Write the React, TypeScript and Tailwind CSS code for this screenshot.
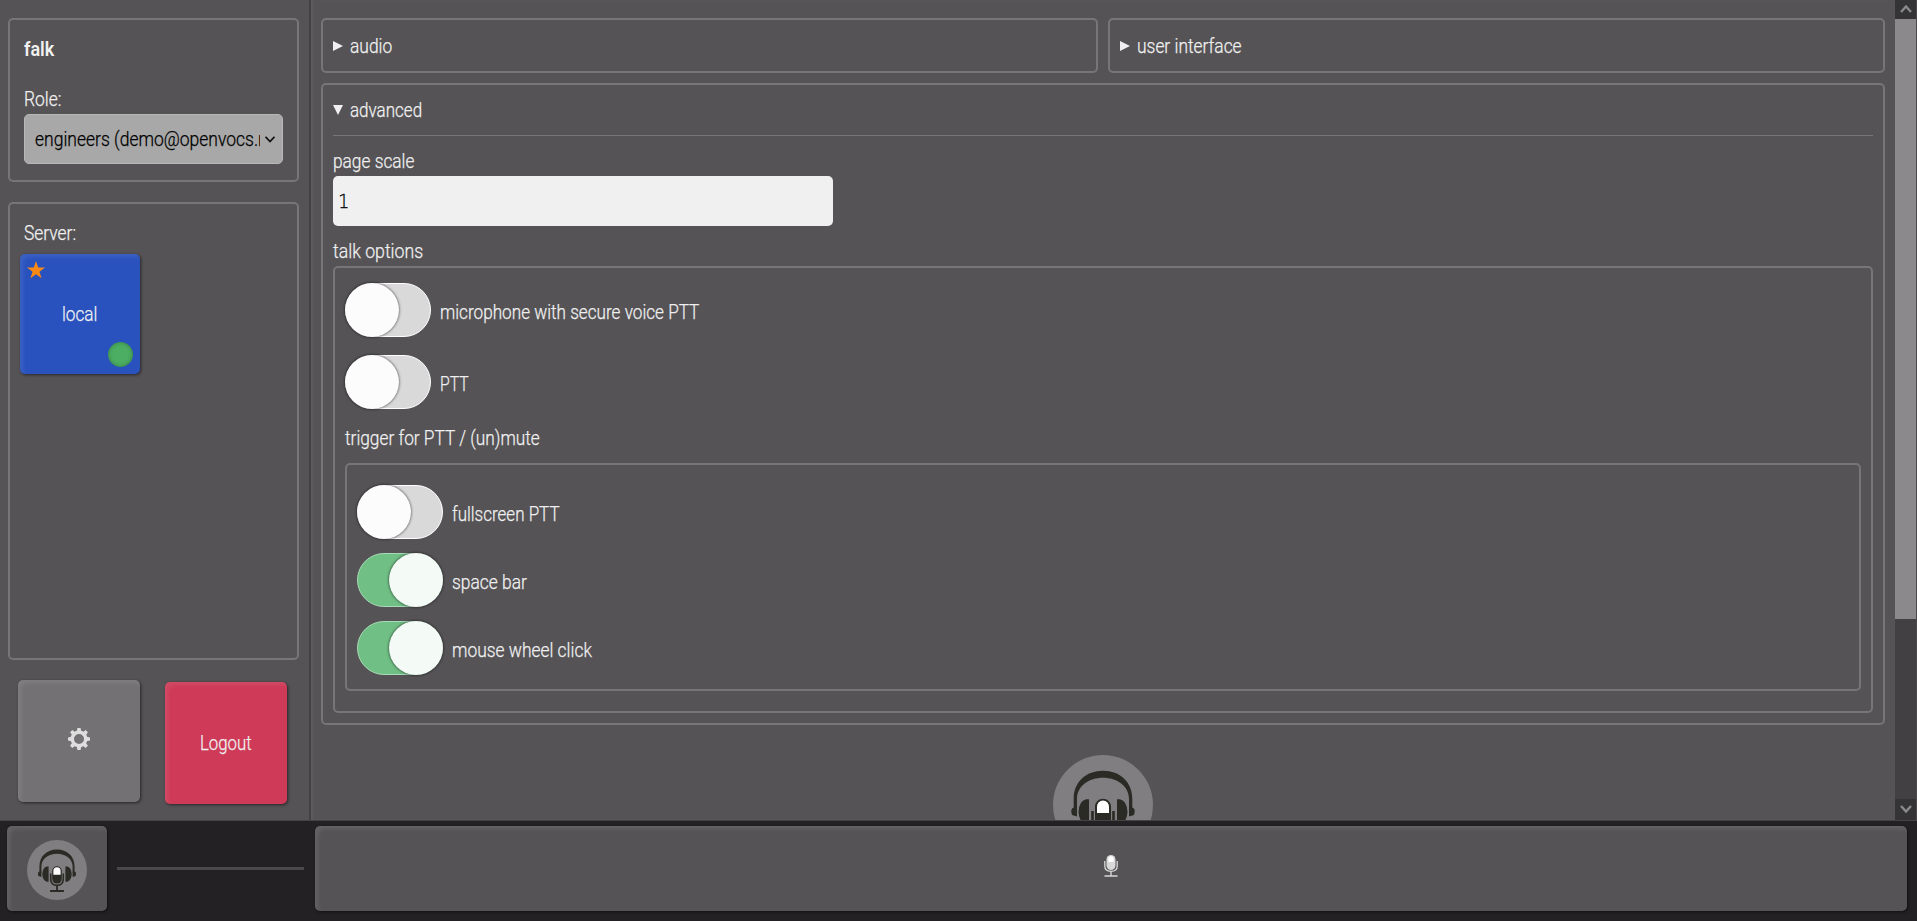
import type { ReactNode } from "react";

const raised =
  "shadow-[inset_4px_4px_4px_-1px_rgba(255,255,255,0.09),1px_1px_3px_rgba(0,0,0,0.55)]";

function Label({
  children,
  className = "origin-left scale-x-[0.87]",
}: {
  children: ReactNode;
  className?: string;
}) {
  return (
    <span
      className={`inline-block whitespace-nowrap font-light leading-6 [-webkit-text-stroke:0.25px_currentColor] ${className}`}
    >
      {children}
    </span>
  );
}

function Toggle({ on = false }: { on?: boolean }) {
  return (
    <span
      className={`flex h-[54px] w-[86px] shrink-0 rounded-full border ${
        on ? "justify-end border-[#a9dab7] bg-[#70bf85]" : "justify-start border-white bg-[#d9d9d9]"
      }`}
    >
      <span
        className={`-m-px size-[54px] rounded-full shadow-[0_0_3px_rgba(0,0,0,0.75)] ${
          on ? "bg-[#f4faf6]" : "bg-[#fcfcfc]"
        }`}
      />
    </span>
  );
}

function ToggleRow({
  label,
  labelClass = "origin-left scale-x-[0.87]",
  on = false,
}: {
  label: string;
  labelClass?: string;
  on?: boolean;
}) {
  return (
    <div className="flex h-[54px] gap-[9px]">
      <Toggle on={on} />
      <div className="pt-[17px]">
        <Label className={labelClass}>{label}</Label>
      </div>
    </div>
  );
}

function Logo({ className }: { className: string }) {
  return (
    <svg viewBox="0 0 100 100" className={className}>
      <circle cx="50" cy="50" r="50" fill="#807e81" />
      <g fill="#2a2b25">
        <path d="M20.7 54V44C20.7 27 33 15.8 50 15.8S79.3 27 79.3 44V54H76V44C76 31 64 22.8 50 22.8S24 31 24 44V54Z" />
        <path d="M24 53V61.5L19 60Q18 57 18.3 55Q19 52.500 21 52.500ZM76 53V61.500L81 60Q82 57 81.700 55Q81 52.500 79 52.500Z" />
        <path d="M36 44.300V69.500H33Q26 67 25.500 57Q26 46 33 44.300ZM64 44.300V69.500H67Q74 67 74.500 57Q74 46 67 44.300Z" />
        <rect x="42" y="43.700" width="16" height="29" rx="8" />
        <path d="M48.500 76H51.500V83.500H61.500V86.500H38.500V83.500H48.500Z" />
      </g>
      <path d="M39.500 56V65Q39.500 75.500 50 75.500T60.500 65V56" fill="none" stroke="#2a2b25" strokeWidth="2.600" />
      <path d="M44 58V51.500A6 6 0 0 1 56 51.500V58Z" fill="#fff" />
    </svg>
  );
}

function MicIcon() {
  return (
    <svg viewBox="0 0 14 22" className="h-[22px] w-3.5">
      <rect x="2.500" y="0" width="9" height="15" rx="4.500" fill="#d8d8d8" />
      <path d="M4.300 7V4Q4.300 1.200 7 1.200T9.700 4V7Z" fill="#fff" />
      <path d="M.8 6V11Q.8 16.300 7 16.300T13.200 11V6" fill="none" stroke="#d8d8d8" strokeWidth="1.300" />
      <path d="M6.300 16H7.700V20.300H13.500V21.700H.5V20.300H6.300Z" fill="#d8d8d8" />
    </svg>
  );
}

function GearIcon() {
  return (
    <svg viewBox="-11 -11 22 22" className="size-[22px]">
      <circle r="6.700" fill="none" stroke="#dedede" strokeWidth="3.400" />
      <g fill="#dedede">
        {[0, 45, 90, 135, 180, 225, 270, 315].map((angle) => (
          <path key={angle} d="M-2.200-7.500L-1.600-11H1.600L2.200-7.500Z" transform={`rotate(${angle})`} />
        ))}
      </g>
    </svg>
  );
}

function Triangle({ open = false }: { open?: boolean }) {
  return (
    <svg viewBox="0 0 10 10" className="mr-[7px] size-2.5 shrink-0">
      <path d={open ? "M0 0H10L5 10Z" : "M0 0L10 5L0 10Z"} fill="#f0f0f0" />
    </svg>
  );
}

function Sidebar() {
  return (
    <aside className="flex w-[311px] shrink-0 flex-col border-r-2 border-[#424143] pt-[18px] pl-2">
      <section className="flex h-[164px] w-[291px] flex-col rounded-[5px] border-2 border-[#777578] pl-3.5">
        <span className="mt-[17px] origin-left scale-x-[0.9] text-xl leading-6 font-semibold">falk</span>
        <Label className="mt-[26px] origin-left scale-x-[0.87]">Role:</Label>
        <div className="mt-[3px] flex h-[50px] w-[259px] items-center rounded-[5px] border border-[#b8b8b8] bg-[#a8a8a8] pl-2.5 text-black">
          <div className="w-[225px] overflow-hidden">
            <Label className="origin-left scale-x-[0.875]">engineers (demo@openvocs.net)</Label>
          </div>
          <svg viewBox="0 0 10 7" className="ml-[5px] h-[7px] w-2.5">
            <path d="M.5.8L5 5.500L9.500.8" fill="none" stroke="#111" strokeWidth="1.800" />
          </svg>
        </div>
      </section>
      <section className="mt-5 h-[458px] w-[291px] rounded-[5px] border-2 border-[#777578] pt-[17px] pl-2.5">
        <div className="pl-1 leading-6">
          <Label>Server:</Label>
        </div>
        <button
          className={`relative mt-[9px] flex size-[120px] items-center justify-center rounded-[5px] bg-[#2952be] ${raised}`}
        >
          <svg viewBox="0 0 18 18" className="absolute top-[7px] left-[7px] size-[18px]">
            <path d="M9 0L11.200 6.600H18L12.500 10.700L14.600 17.300L9 13.300L3.400 17.300L5.500 10.700L0 6.600H6.800Z" fill="#f98815" />
          </svg>
          <Label className="origin-center scale-x-[0.86]">local</Label>
          <span className="absolute right-[7px] bottom-[7px] size-[25px] rounded-full bg-[#4bae62] shadow-[inset_0_0_4px_rgba(0,0,0,0.3)]" />
        </button>
      </section>
      <div className="mt-5 flex pl-2.5">
        <button className={`flex size-[122px] items-center justify-center rounded-[5px] bg-[#737174] pb-1 ${raised}`}>
          <GearIcon />
        </button>
        <button
          className={`mt-0.5 ml-[25px] flex size-[122px] items-center justify-center rounded-[5px] bg-[#ce3a57] ${raised}`}
        >
          <Label className="origin-center scale-x-[0.84]">Logout</Label>
        </button>
      </div>
    </aside>
  );
}

function Settings() {
  return (
    <main className="flex h-full min-w-0 flex-1 flex-col overflow-hidden pt-[18px] pr-2.5 pl-2.5 shadow-[inset_2px_0_2px_rgba(255,255,255,0.05)]">
      <div className="flex shrink-0 gap-2.5">
        {["audio", "user interface"].map((name) => (
          <section
            key={name}
            className="flex h-[55px] flex-1 items-center rounded-[5px] border-2 border-[#777578] pt-px pl-[9.5px]"
          >
            <Triangle />
            <Label>{name}</Label>
          </section>
        ))}
      </div>
      <section className="mt-2.5 h-[642px] shrink-0 rounded-[5px] border-2 border-[#777578] px-2.5">
        <div className="-ml-[0.5px] flex h-[50px] items-center">
          <Triangle open />
          <Label className="origin-left scale-x-[0.85]">advanced</Label>
        </div>
        <hr className="border-[#777578]" />
        <div className="mt-[13px] h-6">
          <Label className="origin-left scale-x-[0.865]">page scale</Label>
        </div>
        <div className="mt-[3px] flex h-[50px] w-[500px] items-center rounded-[5px] bg-[#f0f0f0] pl-[5px] text-black">
          <span className="origin-left scale-x-[0.9] font-['DejaVu_Sans_Light','DejaVu_Sans',sans-serif] font-extralight [-webkit-text-stroke:0.3px_currentColor]">
            1
          </span>
        </div>
        <div className="mt-[13px] h-6">
          <Label className="origin-left scale-x-[0.885]">talk options</Label>
        </div>
        <div className="mt-[3px] h-[447px] rounded-[5px] border-2 border-[#777578] px-2.5 pt-[15px]">
          <div className="flex flex-col gap-[18px]">
            <ToggleRow
              label="microphone with secure voice PTT"
              labelClass="origin-left scale-x-[0.858]"
            />
            <ToggleRow label="PTT" labelClass="origin-left scale-x-[0.79]" />
          </div>
          <div className="mt-[17px] h-6">
            <Label className="origin-left scale-x-[0.864]">trigger for PTT / (un)mute</Label>
          </div>
          <div className="mt-[13px] flex h-[228px] flex-col gap-3.5 rounded-[5px] border-2 border-[#777578] pt-5 pl-2.5">
            <ToggleRow label="fullscreen PTT" labelClass="origin-left scale-x-[0.85]" />
            <ToggleRow label="space bar" on />
            <ToggleRow label="mouse wheel click" on />
          </div>
        </div>
      </section>
      <Logo className="mt-[30px] size-[100px] shrink-0 self-center" />
    </main>
  );
}

function ScrollArrow({ down = false }: { down?: boolean }) {
  return (
    <div className="flex h-[21px] shrink-0 items-center justify-center bg-[#343336]">
      <svg viewBox="0 0 12 9" className="h-[9px] w-3">
        <path d={down ? "M1 1L6 6.500L11 1" : "M1 8L6 2.500L11 8"} fill="none" stroke="#8b898c" strokeWidth="2.400" />
      </svg>
    </div>
  );
}

export default function App() {
  return (
    <div className="flex h-[921px] w-[1917px] flex-col overflow-hidden bg-[#232124] font-[Roboto,sans-serif] text-xl leading-6 text-[#f0f0f0]">
      <div className="flex h-[820px] shrink-0 bg-[#555356]">
        <Sidebar />
        <Settings />
        <div className="flex w-[22px] shrink-0 flex-col border-r border-[#4b494c] bg-[#424043]">
          <div className="-mt-0.5">
            <ScrollArrow />
          </div>
          <div className="h-[600px] bg-[#8b898c]" />
          <div className="flex-1" />
          <ScrollArrow down />
        </div>
      </div>
      <footer className="flex h-[101px] items-start border-t border-[#444346] pt-[5px] pl-[7px]">
        <button className={`flex h-[85px] w-[100px] items-center justify-center rounded-[5px] bg-[#555356] pt-[3px] ${raised}`}>
          <Logo className="size-[60px]" />
        </button>
        <div className="mt-[41px] ml-2.5 h-[3px] w-[187px] bg-[#4a484b]" />
        <button
          className={`ml-[11px] flex h-[85px] w-[1592px] items-center justify-center rounded-[5px] bg-[#555356] pb-[5px] ${raised}`}
        >
          <MicIcon />
        </button>
      </footer>
    </div>
  );
}
